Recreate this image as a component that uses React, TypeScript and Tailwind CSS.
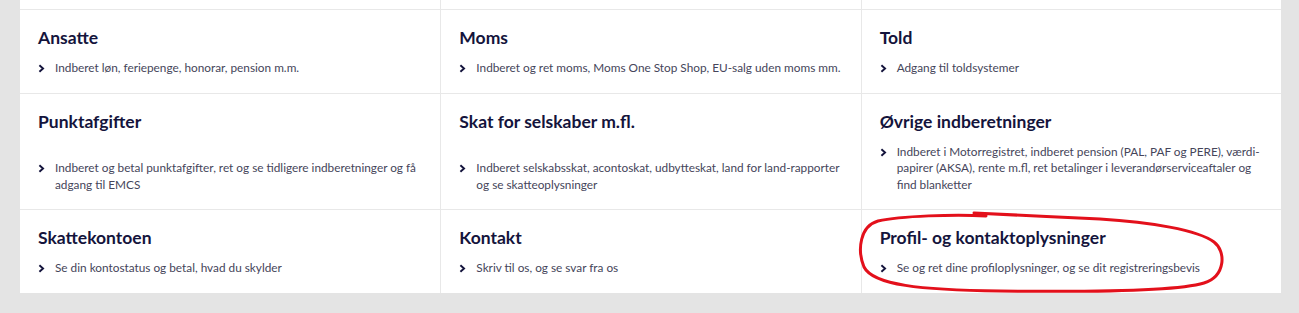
type Item = { title: string; text: string }

const rows: Item[][] = [
  [
    { title: 'Ansatte', text: 'Indberet løn, feriepenge, honorar, pension m.m.' },
    { title: 'Moms', text: 'Indberet og ret moms, Moms One Stop Shop, EU-salg uden moms mm.' },
    { title: 'Told', text: 'Adgang til toldsystemer' },
  ],
  [
    {
      title: 'Punktafgifter',
      text: 'Indberet og betal punktafgifter, ret og se tidligere indberetninger og få adgang til EMCS',
    },
    {
      title: 'Skat for selskaber m.fl.',
      text: 'Indberet selskabsskat, acontoskat, udbytteskat, land for land-rapporter og se skatteoplysninger',
    },
    {
      title: 'Øvrige indberetninger',
      text: 'Indberet i Motorregistret, indberet pension (PAL, PAF og PERE), værdi-papirer (AKSA), rente m.fl, ret betalinger i leverandørserviceaftaler og find blanketter',
    },
  ],
  [
    { title: 'Skattekontoen', text: 'Se din kontostatus og betal, hvad du skylder' },
    { title: 'Kontakt', text: 'Skriv til os, og se svar fra os' },
    {
      title: 'Profil- og kontaktoplysninger',
      text: 'Se og ret dine profiloplysninger, og se dit registreringsbevis',
    },
  ],
]

function Chevron() {
  return (
    <svg viewBox="0 0 8 10" className="mt-[4px] h-[9px] w-[7px] shrink-0">
      <path d="M1.6 1.2 L5.8 5 L1.6 8.8" fill="none" stroke="#14143c" strokeWidth="2.2" />
    </svg>
  )
}

function Cell({ item, first }: { item: Item; first: boolean }) {
  return (
    <div className={`flex flex-col px-[18px] pt-[18px] pb-[16px] ${first ? '' : 'border-l border-[#e8e8e8]'}`}>
      <h3 className="text-[17.5px] font-bold leading-[20px] text-[#14143c]">{item.title}</h3>
      <div className="mt-auto flex gap-[10px] pt-[12px] text-[11.8px] leading-[16.5px] text-[#45455a]">
        <Chevron />
        <p>{item.text}</p>
      </div>
    </div>
  )
}

export default function App() {
  return (
    <div className="relative min-h-screen bg-[#e4e4e4] font-['Lato','Noto_Sans',sans-serif]">
      <div className="ml-[20px] w-[1261px] bg-white">
        <div className="grid h-[10px] grid-cols-3 border-b border-[#e8e8e8]">
          <div />
          <div className="border-l border-[#e8e8e8]" />
          <div className="border-l border-[#e8e8e8]" />
        </div>
        {rows.map((row, i) => (
          <div
            key={i}
            className={`grid grid-cols-3 ${i < rows.length - 1 ? 'border-b border-[#e8e8e8]' : ''}`}
          >
            {row.map((item, j) => (
              <Cell key={item.title} item={item} first={j === 0} />
            ))}
          </div>
        ))}
      </div>
      <svg
        className="pointer-events-none absolute left-0 top-0 h-[313px] w-[1299px]"
        viewBox="0 0 1299 313"
      >
        <path
          d="M986 216 C955 214 900 216 878 221 C860 226 857 250 864 267 C873 285 920 290 1000 291 C1080 292 1178 291 1204 283 C1226 276 1226 251 1214 242 C1198 230 1150 222 1100 219 C1060 217 1010 215 974 213"
          fill="none"
          stroke="#e3101b"
          strokeWidth="3"
          strokeLinecap="round"
        />
      </svg>
    </div>
  )
}
